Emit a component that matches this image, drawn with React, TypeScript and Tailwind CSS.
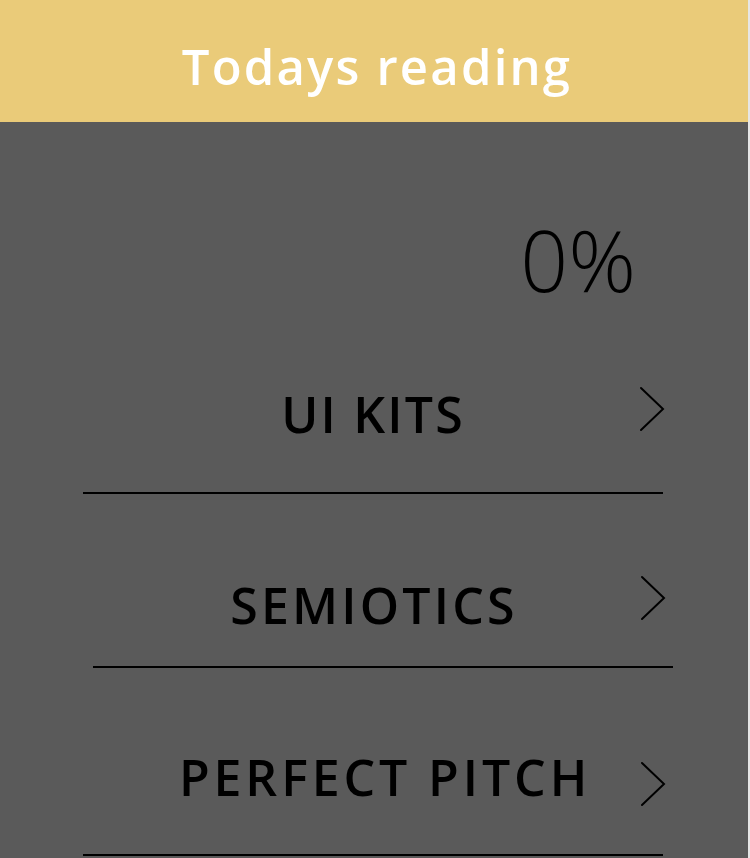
const topics = [
  {
    title: 'UI KITS',
    rowClass: 'ml-[83px] pl-[24px] pr-0 pt-[87px] pb-[53px]',
    textClass: 'tracking-[2.2px]',
    arrowClass: 'mt-[-10px] mr-[-2px]',
  },
  {
    title: 'SEMIOTICS',
    rowClass: 'ml-[93px] pl-[15px] pr-[7px] pt-[86px] pb-[36px]',
    textClass: 'tracking-[3.2px]',
    arrowClass: 'mt-[-14px]',
  },
  {
    title: 'PERFECT PITCH',
    rowClass: 'ml-[83px] pl-[47px] pr-0 pt-[79px] pb-[47px]',
    textClass: 'tracking-[3.9px]',
    arrowClass: 'mt-[14px] mr-[-3px]',
  },
];

function Chevron({ className }: { className: string }) {
  return (
    <svg width="26" height="46" viewBox="0 0 26 46" fill="none" className={`shrink-0 ${className}`}>
      <polyline
        points="2,2 24,23 2,44"
        stroke="#000"
        strokeWidth="2"
        strokeLinecap="round"
        strokeLinejoin="miter"
      />
    </svg>
  );
}

export default function App() {
  return (
    <div className="w-[750px] h-[858px] bg-[#e6e6e6] overflow-hidden font-['Open_Sans',sans-serif]">
      <div className="w-[748px] h-full bg-[#5a5a5a]">
        <header className="h-[122px] bg-[#eacb79] flex items-center justify-center pt-[10px] pl-[6px]">
          <h1 className="text-white text-[49px] font-semibold leading-none tracking-[2.2px]">
            Todays reading
          </h1>
        </header>

        <div className="pt-[96px] pr-[112px] text-right">
          <span className="text-black text-[84px] font-light leading-none">0%</span>
        </div>

        <div>
          {topics.map((t) => (
            <div
              key={t.title}
              className={`w-[580px] flex items-center border-b-2 border-black ${t.rowClass}`}
            >
              <span
                className={`flex-1 text-center text-black text-[50px] font-semibold leading-none ${t.textClass}`}
              >
                {t.title}
              </span>
              <Chevron className={t.arrowClass} />
            </div>
          ))}
        </div>
      </div>
    </div>
  );
}
